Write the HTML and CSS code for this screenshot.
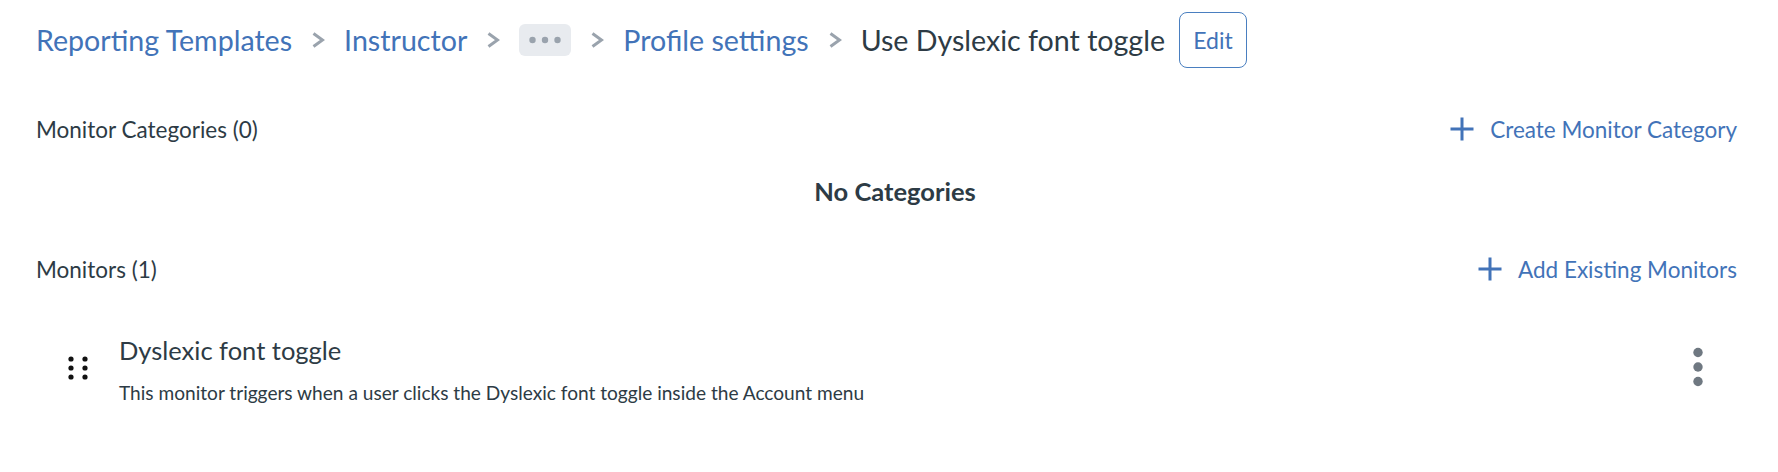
FILE: index.html
```html
<!DOCTYPE html>
<html lang="en">
<head>
<meta charset="utf-8">
<title>Use Dyslexic font toggle</title>
<link rel="stylesheet" href="styles.css">
</head>
<body>
<div class="page">
  <nav class="crumbs">
    <a class="crumb-link" href="#">Reporting Templates</a>
    <svg class="chev" width="14" height="16" viewBox="0 0 14 16"><polyline points="2.5,1.5 11.5,8 2.5,14.5" fill="none" stroke="#9aa3ad" stroke-width="3"/></svg>
    <a class="crumb-link" href="#">Instructor</a>
    <svg class="chev" width="14" height="16" viewBox="0 0 14 16"><polyline points="2.5,1.5 11.5,8 2.5,14.5" fill="none" stroke="#9aa3ad" stroke-width="3"/></svg>
    <span class="crumb-more"><svg width="32" height="8" viewBox="0 0 32 8"><circle cx="3.5" cy="4" r="3.2" fill="#9aa3ad"/><circle cx="16" cy="4" r="3.2" fill="#9aa3ad"/><circle cx="28.5" cy="4" r="3.2" fill="#9aa3ad"/></svg></span>
    <svg class="chev" width="14" height="16" viewBox="0 0 14 16"><polyline points="2.5,1.5 11.5,8 2.5,14.5" fill="none" stroke="#9aa3ad" stroke-width="3"/></svg>
    <a class="crumb-link" href="#">Profile settings</a>
    <svg class="chev" width="14" height="16" viewBox="0 0 14 16"><polyline points="2.5,1.5 11.5,8 2.5,14.5" fill="none" stroke="#9aa3ad" stroke-width="3"/></svg>
    <span class="crumb-current">Use Dyslexic font toggle</span>
    <button class="edit-btn" type="button">Edit</button>
  </nav>

  <div class="section-head head-cats">
    <h2 class="section-title">Monitor Categories (0)</h2>
    <button class="add-btn" type="button">
      <svg width="24" height="24" viewBox="0 0 24 24"><path d="M12 0.5V23.5M0.5 12H23.5" stroke="#4273b8" stroke-width="3" fill="none"/></svg>
      <span>Create Monitor Category</span>
    </button>
  </div>

  <p class="empty">No Categories</p>

  <div class="section-head head-mons">
    <h2 class="section-title">Monitors (1)</h2>
    <button class="add-btn" type="button">
      <svg width="24" height="24" viewBox="0 0 24 24"><path d="M12 0.5V23.5M0.5 12H23.5" stroke="#4273b8" stroke-width="3" fill="none"/></svg>
      <span>Add Existing Monitors</span>
    </button>
  </div>

  <div class="monitor-row">
    <svg class="handle" width="20" height="24" viewBox="0 0 20 24">
      <circle cx="3" cy="3" r="2.6" fill="#111"/><circle cx="17" cy="3" r="2.6" fill="#111"/>
      <circle cx="3" cy="12" r="2.6" fill="#111"/><circle cx="17" cy="12" r="2.6" fill="#111"/>
      <circle cx="3" cy="21" r="2.6" fill="#111"/><circle cx="17" cy="21" r="2.6" fill="#111"/>
    </svg>
    <div class="monitor-text">
      <div class="monitor-name">Dyslexic font toggle</div>
      <div class="monitor-desc">This monitor triggers when a user clicks the Dyslexic font toggle inside the Account menu</div>
    </div>
    <svg class="kebab" width="10" height="40" viewBox="0 0 10 40">
      <circle cx="5" cy="5.5" r="4.7" fill="#6f7881"/>
      <circle cx="5" cy="20" r="4.7" fill="#6f7881"/>
      <circle cx="5" cy="34.5" r="4.7" fill="#6f7881"/>
    </svg>
  </div>
</div>
</body>
</html>
```

FILE: styles.css
```css
* { box-sizing: border-box; }
html, body { margin: 0; padding: 0; background: #fff; }
body {
  font-family: Lato, "Open Sans", "Liberation Sans", sans-serif;
  color: #2d3b45;
}
.page {
  padding: 12px 36px 0 36px;
}
.crumbs {
  display: flex;
  align-items: center;
  height: 56px;
  font-size: 28.6px;
}
.crumb-link {
  color: #4273b8;
  text-decoration: none;
}
.chev {
  margin: 0 19px;
  flex: none;
}
.crumb-more {
  display: inline-flex;
  align-items: center;
  justify-content: center;
  width: 52px;
  height: 32px;
  border-radius: 6px;
  background: #e8ebef;
}
.crumb-current {
  color: #2d3b45;
}
.edit-btn {
  margin-left: 14px;
  height: 56px;
  width: 68px;
  border: 1px solid #4a7fc0;
  border-radius: 8px;
  background: #fff;
  color: #4273b8;
  font-family: inherit;
  font-size: 23px;
  padding: 0;
}
.section-head {
  display: flex;
  justify-content: space-between;
  align-items: center;
  height: 40px;
}
.head-cats { margin-top: 41px; }
.head-mons { margin-top: 43px; }
.section-title {
  margin: 0;
  font-size: 22.5px;
  font-weight: 400;
}
.add-btn {
  display: flex;
  align-items: center;
  gap: 16px;
  border: 0;
  background: none;
  padding: 0 5px 0 0;
  font-family: inherit;
  font-size: 22.5px;
  color: #4273b8;
}
.empty {
  margin: 27px 0 0 0;
  padding-left: 12px;
  line-height: 30px;
  text-align: center;
  font-size: 25.5px;
  font-weight: 700;
}
.monitor-row {
  display: flex;
  align-items: center;
  margin-top: 46px;
  padding-left: 32px;
}
.handle {
  flex: none;
  margin-bottom: 4px;
}
.monitor-text {
  flex: 1;
  margin-left: 31px;
}
.monitor-name {
  font-size: 25.5px;
  line-height: 30px;
  font-weight: 400;
}
.monitor-desc {
  margin-top: 16px;
  font-size: 19.1px;
  line-height: 24px;
}
.kebab {
  flex: none;
  margin-right: 39px;
  margin-bottom: 6px;
}
```
